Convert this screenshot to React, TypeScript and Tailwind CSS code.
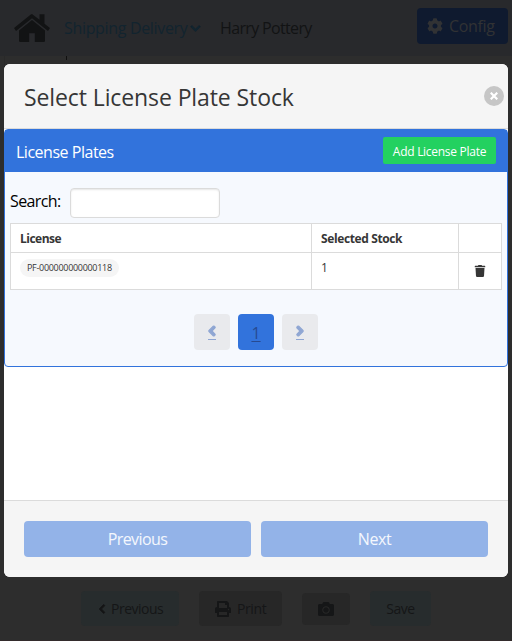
import React from "react";
import { FaAngleLeft, FaAngleRight, FaCamera, FaChevronDown, FaChevronLeft, FaCog, FaPrint, FaTrash } from "react-icons/fa";

function HomeIcon() {
  return (
    <svg width="36" height="28" viewBox="0 0 36 28" fill="currentColor">
      <path d="M18 0 L25.5 5.8 V0.2 H30.5 V9.7 L36 14.1 L34 17 L18 4.3 L2 17 L0 14.1 L16.8 0.5 Q18 -0.4 19.2 0.5Z" />
      <path d="M18 6 L31 16.4 V26.8 Q31 28 29.8 28 H20.8 V19.2 H15.2 V28 H6.2 Q5 28 5 26.8 V16.4Z" />
    </svg>
  );
}

function Background() {
  return (
    <div className="flex h-[641px] flex-col bg-[#2d2d2d]">
      <header className="flex h-14 items-center bg-[#28292c] pl-3.5 pr-1 text-[#121314]">
        <HomeIcon />
        <span className="ml-3.5 flex w-[138px] items-center text-[#12242f]">
          <span className="w-[124px] whitespace-nowrap text-[16px] tracking-[-0.33px]">Shipping Delivery</span>
          <FaChevronDown size={11} className="ml-[2px] shrink-0" strokeWidth={40} stroke="currentColor" />
        </span>
        <span className="ml-[18px] whitespace-nowrap text-[16px] tracking-[-0.65px]">Harry Pottery</span>
        <button className="mb-1 ml-auto flex h-9 w-[91px] items-center rounded-[4px] bg-[#0f1a2f] pl-[10px] text-[#313234]">
          <FaCog size={16} />
          <span className="ml-[6px] text-[16px] tracking-[-0.35px]">Config</span>
        </button>
      </header>
      <div className="ml-1 flex h-3 w-[504px] border-l border-[#292929] pl-[61px]">
        <span className="h-1 w-px bg-[#101010]" />
      </div>
      <div className="grow" />
      <footer className="flex h-[82px] items-start border-b border-[#332b2c] pl-[81px] pt-8 text-[14px] text-[#151617]">
        <span className="flex h-[35px] w-[98px] items-center rounded-[4px] bg-[#272c2d] pl-4">
          <FaChevronLeft size={10} strokeWidth={50} stroke="currentColor" />
          <span className="ml-1 tracking-[-0.5px]">Previous</span>
        </span>
        <span className="ml-5 flex h-[35px] w-[83px] items-center rounded-[4px] bg-[#272727] pl-4">
          <FaPrint size={16} />
          <span className="ml-[6px] tracking-[-0.4px]">Print</span>
        </span>
        <span className="ml-5 mt-[2px] flex h-8 w-12 items-center justify-center rounded-[4px] bg-[#272727]">
          <FaCamera size={16} />
        </span>
        <span className="ml-5 flex h-[35px] w-[61px] items-center justify-center rounded-[4px] bg-[#272c2d] tracking-[-0.5px]">Save</span>
      </footer>
    </div>
  );
}

function LicenseTable() {
  return (
    <table className="mt-[5px] w-[492px] table-fixed border-collapse bg-white text-[12px] text-[#363636]">
      <colgroup>
        <col className="w-[301px]" />
        <col className="w-[147px]" />
        <col className="w-[43px]" />
      </colgroup>
      <thead>
        <tr className="h-[29px] text-left">
          <th className="border border-[#dbdbdb] px-[9px] pb-0 pt-[2px] font-bold tracking-[-0.5px]">License</th>
          <th className="border border-[#dbdbdb] px-[9px] pb-0 pt-[2px] font-bold tracking-[-0.38px]">Selected Stock</th>
          <th className="border border-[#dbdbdb]" />
        </tr>
      </thead>
      <tbody>
        <tr className="h-[37px]">
          <td className="border border-[#dbdbdb] px-[9px] pb-0 pt-[6px] align-top">
            <span className="flex h-[18px] w-[99px] items-center rounded-full bg-[#f5f5f5] pl-[7px] text-[9px] tracking-[-0.3px]">PF-000000000000118</span>
          </td>
          <td className="border border-[#dbdbdb] px-[9px] pb-0 pt-[6px] align-top leading-[18px]">1</td>
          <td className="border border-[#dbdbdb] p-0">
            <FaTrash size={12} className="mx-auto" />
          </td>
        </tr>
      </tbody>
    </table>
  );
}

function Pagination() {
  return (
    <nav className="mt-6 flex justify-center gap-2 text-[16px]">
      <span className="flex h-9 w-9 items-center justify-center rounded-[4px] bg-[#e9eaed] text-[#8fa6d3]">
        <span className="mt-[2px] flex h-[14px] w-2 justify-center border-b border-[#8fa6d3]">
          <FaAngleLeft size={16} className="-mt-[3px] shrink-0" strokeWidth={35} stroke="currentColor" />
        </span>
      </span>
      <span className="flex h-9 w-9 items-center justify-center rounded-[4px] bg-[#3273dc] pt-0.5 text-[#274a91] underline underline-offset-2">1</span>
      <span className="flex h-9 w-9 items-center justify-center rounded-[4px] bg-[#e9eaed] text-[#8fa6d3]">
        <span className="mt-[2px] flex h-[14px] w-2 justify-center border-b border-[#8fa6d3]">
          <FaAngleRight size={16} className="-mt-[3px] shrink-0" strokeWidth={35} stroke="currentColor" />
        </span>
      </span>
    </nav>
  );
}

function Modal() {
  return (
    <div className="absolute left-1 top-16 flex h-[513px] w-[504px] flex-col overflow-hidden rounded-[6px] bg-white">
      <div className="flex h-[65px] items-center justify-between border-b border-[#dbdbdb] bg-[#f5f5f5] pl-5 pr-1">
        <h1 className="whitespace-nowrap pt-[3px] text-[23px] tracking-[-0.1px] text-[#363636]">Select License Plate Stock</h1>
        <button className="flex h-5 w-5 items-center justify-center rounded-full bg-[#c6c6c6] text-white">
          <svg width="8" height="8" viewBox="0 0 8 8" stroke="currentColor" strokeWidth="2.2">
            <path d="M0.7 0.7L7.3 7.3M7.3 0.7L0.7 7.3" />
          </svg>
        </button>
      </div>
      <section className="h-[238px] rounded-[4px] border border-[#3273dc] bg-[#f6f9fe]">
        <div className="flex h-[42px] items-center justify-between bg-[#3273dc] px-[11px] text-white">
          <h2 className="pt-[1px] text-[16px] tracking-[-0.48px]">License Plates</h2>
          <button className="mb-[1px] flex h-[27px] w-[113px] items-center justify-center rounded-[2px] bg-[#23d160] pt-[2px] text-[12px] tracking-[-0.28px]">Add License Plate</button>
        </div>
        <div className="px-[5px] pt-4">
          <label className="flex h-[30px] items-center text-[16px] text-black">
            <span className="mb-[5px] w-[60px] tracking-[-0.6px]">Search:</span>
            <input className="h-[30px] w-[150px] rounded-[4px] border border-[#dbdbdb] bg-white shadow-[inset_0_1px_2px_rgba(10,10,10,0.1)] outline-none" />
          </label>
          <LicenseTable />
          <Pagination />
        </div>
      </section>
      <div className="grow" />
      <footer className="flex h-[77px] gap-[10px] border-t border-[#dbdbdb] bg-[#f5f5f5] px-5 pt-5 text-[16px] text-white/90">
        <button className="h-9 flex-1 rounded-[4px] bg-[#93b3e8] tracking-[-0.6px]">Previous</button>
        <button className="h-9 flex-1 rounded-[4px] bg-[#93b3e8] tracking-[-0.4px]">Next</button>
      </footer>
    </div>
  );
}

export default function App() {
  return (
    <main className="relative h-[641px] w-full overflow-hidden font-['Open_Sans','Noto_Sans',sans-serif]">
      <Background />
      <Modal />
    </main>
  );
}
